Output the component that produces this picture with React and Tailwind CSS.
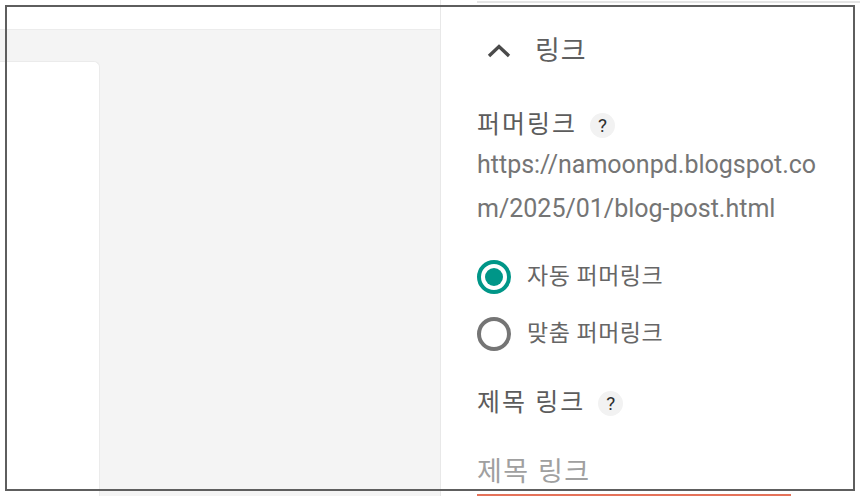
import { useState } from 'react'

const font = { fontFamily: 'Roboto, "Noto Sans CJK KR", sans-serif' }

function HelpBadge() {
  return (
    <span className="ml-[13px] flex h-[25px] w-[25px] items-center justify-center rounded-full bg-[#f2f2f2] text-[19px] leading-none text-[#2e2e2e]">
      ?
    </span>
  )
}

function Radio({ checked, label, onClick }) {
  return (
    <button type="button" onClick={onClick} className="flex h-[44px] items-center gap-[16px] text-left">
      <span
        className={
          checked
            ? 'flex h-[34px] w-[34px] items-center justify-center rounded-full border-[4px] border-[#009688]'
            : 'flex h-[34px] w-[34px] items-center justify-center rounded-full border-[4px] border-[#757575]'
        }
      >
        {checked ? <span className="h-[18px] w-[18px] rounded-full bg-[#009688]" /> : null}
      </span>
      <span className="text-[23px] tracking-[0.5px] text-[#666]">{label}</span>
    </button>
  )
}

function LinkPanel() {
  const [mode, setMode] = useState('auto')

  return (
    <aside className="flex w-[420px] flex-col border-l border-[#e8e8e8] bg-white pl-[36px]">
      <div className="mt-[1px] h-[2px] bg-[#e4e4e4]" />
      <div className="mt-[24px] flex h-[48px] items-center">
        <svg width="24" height="16" viewBox="0 0 24 16" className="ml-[10px]">
          <polyline points="2,13 12,3.5 22,13" fill="none" stroke="#4a4a4a" strokeWidth="3.4" />
        </svg>
        <span className="ml-[24px] text-[27px] tracking-[1px] text-[#5f5f5f]">링크</span>
      </div>

      <div className="mt-[30px] flex h-[40px] items-center">
        <span className="text-[25px] tracking-[2px] text-[#5c5c5c]">퍼머링크</span>
        <HelpBadge />
      </div>
      <p className="mt-[-2px] w-[346px] break-all text-[25px] leading-[44px] text-[#757575]">
        https://namoonpd.blogspot.com/2025/01/blog-post.html
      </p>

      <div className="mt-[24px] flex flex-col gap-[13px]">
        <Radio checked={mode === 'auto'} label="자동 퍼머링크" onClick={() => setMode('auto')} />
        <Radio checked={mode === 'custom'} label="맞춤 퍼머링크" onClick={() => setMode('custom')} />
      </div>

      <div className="mt-[27px] flex h-[40px] items-center">
        <span className="text-[25px] tracking-[2px] text-[#5c5c5c]">제목 링크</span>
        <HelpBadge />
      </div>
      <div className="mt-[25px] flex h-[48px] w-[314px] items-center border-b-2 border-[#e5735a]">
        <span className="mt-[2px] text-[27px] tracking-[1.5px] text-[#a0a0a0]">제목 링크</span>
      </div>
    </aside>
  )
}

export default function App() {
  return (
    <div className="relative flex h-[496px] w-[860px] overflow-hidden bg-white" style={font}>
      <section className="flex w-[440px] flex-col">
        <div className="h-[30px] border-b border-[#ececec] bg-white" />
        <div className="flex-1 bg-[#f4f4f4] pt-[31px]">
          <div className="h-full w-[100px] rounded-tr-[6px] border-r border-t border-[#ebebeb] bg-white" />
        </div>
      </section>
      <LinkPanel />
      <div className="pointer-events-none absolute left-[5px] top-[5px] h-[486px] w-[850px] border-2 border-[#5e5e5e]" />
    </div>
  )
}
